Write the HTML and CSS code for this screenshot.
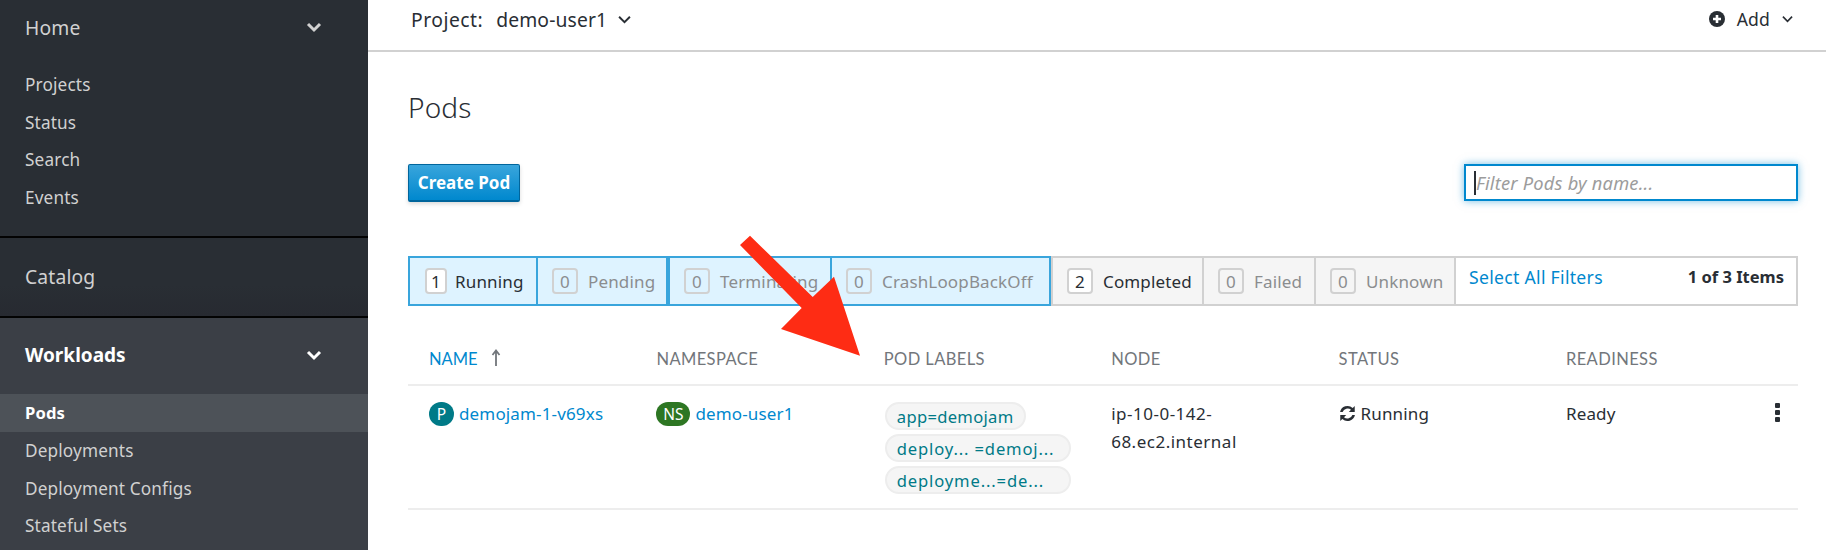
FILE: index.html
```html
<!DOCTYPE html>
<html lang="en">
<head>
<meta charset="utf-8">
<title>Pods</title>
<link rel="stylesheet" href="styles.css">
</head>
<body>
<div class="app">
  <nav class="sidebar">
    <section class="nav-group nav-home">
      <div class="nav-head"><span>Home</span><svg class="nav-chev" viewBox="0 0 16 12"><path d="M2 3l6 6 6-6" fill="none" stroke="currentColor" stroke-width="3"/></svg></div>
      <ul class="nav-list">
        <li>Projects</li><li>Status</li><li>Search</li><li>Events</li>
      </ul>
    </section>
    <section class="nav-group nav-catalog">
      <div class="nav-head"><span>Catalog</span></div>
    </section>
    <section class="nav-group nav-workloads">
      <div class="nav-head"><span>Workloads</span><svg class="nav-chev" viewBox="0 0 16 12"><path d="M2 3l6 6 6-6" fill="none" stroke="currentColor" stroke-width="3"/></svg></div>
      <ul class="nav-list">
        <li class="active">Pods</li><li>Deployments</li><li>Deployment Configs</li><li>Stateful Sets</li>
      </ul>
    </section>
  </nav>
  <main class="main">
    <header class="topbar">
      <div class="project"><span class="project-label">Project:</span><span>demo-user1</span><svg class="caret" viewBox="0 0 12 8"><path d="M1 1.5l5 5 5-5" fill="none" stroke="currentColor" stroke-width="1.8"/></svg></div>
      <div class="add">
        <svg class="add-icon" viewBox="0 0 16 16"><circle cx="8" cy="8" r="8" fill="#292e34"/><path d="M8 4v8M4 8h8" stroke="#fff" stroke-width="2.6"/></svg>
        <span>Add</span><svg class="caret" viewBox="0 0 12 8"><path d="M1 1.5l5 5 5-5" fill="none" stroke="currentColor" stroke-width="1.8"/></svg>
      </div>
    </header>
    <div class="content">
      <h1 class="title">Pods</h1>
      <div class="actions">
        <button class="btn-primary">Create Pod</button>
        <div class="filter-input"><span class="cursor"></span><span class="placeholder">Filter Pods by name...</span></div>
      </div>
      <div class="filters">
        <div class="chip on w-running"><b class="count lit slim">1</b><span class="dark">Running</span></div>
        <div class="chip on w-pending"><b class="count">0</b><span>Pending</span></div>
        <div class="chip on w-term"><b class="count">0</b><span>Terminating</span></div>
        <div class="chip on w-crash"><b class="count">0</b><span>CrashLoopBackOff</span></div>
        <div class="chip w-comp"><b class="count lit">2</b><span class="dark">Completed</span></div>
        <div class="chip w-failed"><b class="count">0</b><span>Failed</span></div>
        <div class="chip w-unknown"><b class="count">0</b><span>Unknown</span></div>
        <div class="filter-end"><a class="link">Select All Filters</a><strong class="items">1 of 3 Items</strong></div>
      </div>
      <div class="table">
        <div class="row head">
          <div class="sorted">NAME <svg class="sort" viewBox="0 0 10 18"><path d="M5 17V2M1.5 6L5 1.5 8.5 6" fill="none" stroke="#72767b" stroke-width="1.8"/></svg></div>
          <div>NAMESPACE</div><div>POD LABELS</div><div>NODE</div><div>STATUS</div><div>READINESS</div>
        </div>
        <div class="row body">
          <div class="cell-res"><i class="badge pod">P</i><a class="link">demojam-1-v69xs</a></div>
          <div class="cell-res"><i class="badge ns">NS</i><a class="link">demo-user1</a></div>
          <div class="labels">
            <span class="tag">app=demojam</span>
            <span class="tag wide">deploy... =demoj...</span>
            <span class="tag wide">deployme...=de...</span>
          </div>
          <div class="node">ip-10-0-142-<br>68.ec2.internal</div>
          <div class="status"><svg class="sync" viewBox="0 0 16 16"><path d="M14.8 1v5.6H9.2l2.1-2.1A5 5 0 0 0 3.4 6.6H1a7.2 7.2 0 0 1 11.9-3.8zM1.2 15V9.4h5.6l-2.1 2.1a5 5 0 0 0 7.9-2.1H15a7.2 7.2 0 0 1-11.9 3.8z" fill="#292e34"/></svg>Running</div>
          <div class="ready">Ready<span class="kebab"><i></i><i></i><i></i></span></div>
        </div>
      </div>
    </div>
  </main>
  <svg class="arrow" viewBox="0 0 1826 550"><polygon points="740,245 750,235.7 812.7,297 834,276.7 860,355.7 781,329 801.7,308" fill="#fe2c14"/></svg>
</div>
</body>
</html>
```
FILE: styles.css
```css
* { box-sizing: border-box; }
html, body { margin: 0; height: 550px; overflow: hidden; background: #fff; }
body { font-family: "Noto Sans", "Lato", sans-serif; font-size: 17px; letter-spacing: .15px; color: #292e34; }
.app { display: flex; height: 550px; position: relative; overflow: hidden; }
.sidebar { width: 368px; flex: none; background: #292e34; color: #d1d1d1; display: flex; flex-direction: column; }
.nav-group { border-bottom: 2px solid #030303; }
.nav-home { height: 238px; padding-top: 7px; }
.nav-catalog { height: 80px; padding-top: 18px; background: linear-gradient(#292e34 60%, #272a31); }
.nav-workloads { flex: 1; background: #3b3f46; border-bottom: 0; padding-top: 17px; }
.nav-head { height: 40px; padding: 0 46px 0 25px; display: flex; align-items: center; justify-content: space-between; font-size: 19.3px; }
.nav-workloads .nav-head { color: #fff; font-weight: 700; font-size: 19px; letter-spacing: 0; }
.nav-chev { width: 16px; height: 12px; }
.nav-list { list-style: none; margin: 0; padding: 0; }
.nav-home .nav-list { margin-top: 19px; }
.nav-workloads .nav-list { margin-top: 19px; }
.nav-list li { height: 37.6px; line-height: 37px; padding-left: 25px; font-size: 17.2px; }
.nav-list li.active { background: #4d5258; color: #fff; font-weight: 700; height: 38px; font-size: 16.6px; }
.main { flex: 1; min-width: 0; display: flex; flex-direction: column; }
.topbar { height: 52px; border-bottom: 2px solid #d1d1d1; display: flex; align-items: center; justify-content: space-between; padding: 0 33px 12px 43px; font-size: 19.3px; }
.project { display: flex; align-items: center; gap: 13px; }
.project-label { letter-spacing: .5px; }
.project .caret { margin-left: -2px; width: 13px; height: 9px; }
.caret { width: 11px; height: 8px; }
.add { display: flex; align-items: center; gap: 12px; font-size: 17.6px; }
.add-icon { width: 16px; height: 16px; }
.content { flex: 1; padding: 0 28px 0 40px; }
.title { margin: 37px 0 0; font-size: 28px; line-height: 36px; font-weight: 300; }
.actions { display: flex; justify-content: space-between; align-items: flex-start; margin-top: 39px; }
.btn-primary { width: 112px; height: 38px; border: 1px solid #00659c; border-bottom-width: 2px; border-radius: 2px; background: linear-gradient(#39a5dc, #0088ce); color: #fff; font: 700 17px "Noto Sans", sans-serif; padding: 0; box-shadow: 0 2px 4px rgba(0,0,0,.15); }
.filter-input { width: 334px; height: 37px; border: 2px solid #0088ce; display: flex; align-items: center; padding-left: 8px; box-shadow: 0 0 8px rgba(0,136,206,.55); font-size: 18.3px; }
.cursor { width: 2px; height: 24px; background: #292e34; flex: none; }
.placeholder { color: #9c9c9c; font-style: italic; letter-spacing: .2px; }
.filters { display: flex; height: 50px; margin-top: 54px; }
.chip { flex: none; display: flex; align-items: center; gap: 10px; height: 50px; background: #f5f5f5; border: 2px solid #d1d1d1; border-left-width: 0; padding-left: 14px; color: #8b8d8f; font-size: 17px; }
.chip.on { background: #def3ff; border-color: #39a5dc; padding-left: 14px; }
.w-running { width: 130px; border-left-width: 2px !important; }
.w-pending { width: 130px; }
.w-term { width: 164px; border-left: 2px solid #39a5dc !important; }
.w-crash { width: 219px; }
.w-comp { width: 153px; border-left: 2px solid #d1d1d1 !important; }
.w-failed { width: 112px; }
.w-unknown { width: 140px; }
.count { flex: none; min-width: 26px; height: 26px; padding: 0 6px; border: 2px solid #d1d1d1; border-radius: 4px; font-weight: 400; display: flex; align-items: center; justify-content: center; line-height: 1; }
.count.slim { min-width: 22px; padding: 0; margin-right: -2px; margin-left: 1px; }
.count.lit { background: #fff; color: #292e34; }
.dark { color: #292e34; }
.filter-end { flex: 1; display: flex; justify-content: space-between; align-items: flex-start; padding: 7px 12px 0 13px; border: 2px solid #d1d1d1; border-left: 0; font-size: 17.6px; letter-spacing: .3px; }
.link { color: #0088ce; }
.items { font-weight: 700; font-size: 16.5px; letter-spacing: 0; }
.table { margin-top: 30px; }
.row { display: grid; grid-template-columns: repeat(6, 227.4px); padding-left: 21px; }
.head { height: 50px; padding-top: 13px; border-bottom: 2px solid #ededed; color: #72767b; font-family: "Lato", sans-serif; font-size: 16.5px; letter-spacing: .4px; }
.sorted { color: #0088ce; display: flex; gap: 13px; align-items: flex-start; letter-spacing: 0; }
.sort { width: 10px; height: 18px; margin-top: 0; }
.body { height: 124px; padding-top: 16px; border-bottom: 2px solid #ededed; }
.cell-res { display: flex; align-items: flex-start; gap: 5px; }
.badge { flex: none; height: 24px; min-width: 25px; padding: 0 4px; border-radius: 12px; color: #fff; font-style: normal; display: flex; align-items: center; justify-content: center; font-size: 15.5px; letter-spacing: 0; }
.pod { background: #007a87; }
.ns { background: #2d7623; width: 34px; padding: 0; }
.labels { display: flex; flex-direction: column; align-items: flex-start; gap: 4px; margin-left: 1px; font-size: 16.6px; letter-spacing: .3px; }
.tag { height: 28px; padding: 0 10px; border: 2px solid #ededed; border-radius: 14px; background: #f5f5f5; color: #007a87; display: flex; align-items: center; white-space: nowrap; }
.tag.wide { width: 186px; letter-spacing: .85px; }
.node { line-height: 28px; margin-top: -2px; letter-spacing: .5px; }
.status { display: flex; gap: 5px; align-items: flex-start; }
.sync { width: 17px; height: 17px; margin-top: 3px; flex: none; }
.ready { position: relative; }
.kebab { position: absolute; left: 209px; top: 1px; display: flex; flex-direction: column; gap: 2px; }
.kebab i { width: 5px; height: 5px; border-radius: 1px; background: #292e34; }
.arrow { position: absolute; left: 0; top: 0; width: 1826px; height: 550px; pointer-events: none; }
```
